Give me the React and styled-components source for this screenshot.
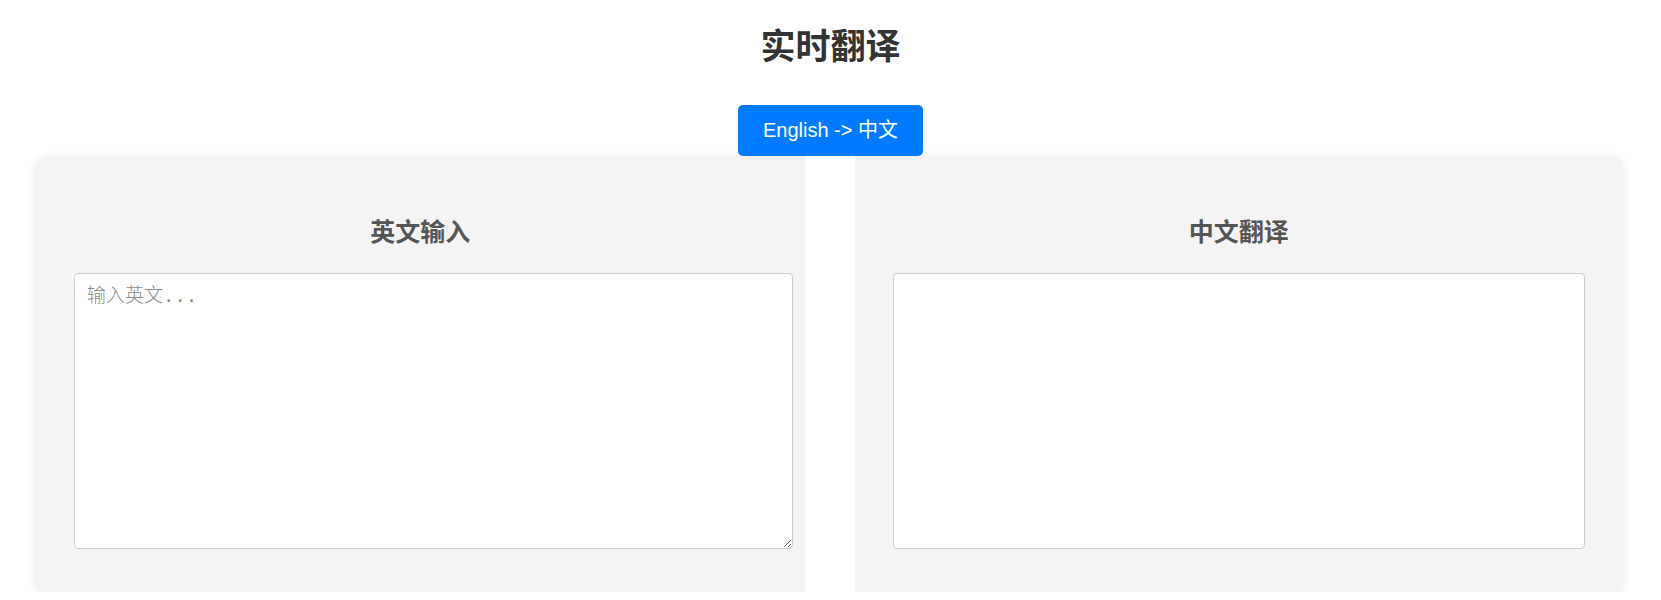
import React, { useState } from "react";
import styled, { createGlobalStyle } from "styled-components";

const GlobalStyle = createGlobalStyle`
  body {
    margin: 0;
    background: #fff;
    font-family: "Liberation Sans", Arial, "Noto Sans CJK SC", sans-serif;
  }
`;

const Page = styled.div`
  display: flex;
  flex-direction: column;
  align-items: center;
  padding-top: 24px;
`;

const Title = styled.h1`
  margin: 0;
  font-size: 35px;
  line-height: 45px;
  font-weight: bold;
  color: #333;
`;

const SwitchButton = styled.button`
  margin-top: 36px;
  padding: 14px 25px;
  font-family: inherit;
  font-size: 20px;
  line-height: 23px;
  color: #fff;
  background: #007bff;
  border: none;
  border-radius: 5px;
  cursor: pointer;
`;

const Container = styled.div`
  align-self: stretch;
  margin: 0 38px 0 36px;
  display: flex;
  gap: 50px;
  background: #fff;
  border-radius: 12px;
  overflow: hidden;
  box-shadow: 0 2px 10px rgba(0, 0, 0, 0.1);
`;

const Panel = styled.div`
  flex: 1;
  min-width: 0;
  background: #f4f4f4;
  padding: 40px 38px 43px;
`;

const PanelTitle = styled.h2`
  margin: 20px 0 25px;
  text-align: center;
  font-size: 25px;
  line-height: 32px;
  color: #555;
`;

const Input = styled.textarea`
  display: block;
  width: 100%;
  height: 250px;
  padding: 12px;
  font-size: 19px;
  line-height: 1.2;
  font-family: "Liberation Mono", "Noto Sans CJK SC", monospace;
  border: 1px solid #ccc;
  border-radius: 4px;
  background: #fff;
  outline: none;

  &::placeholder {
    color: #8a8a8a;
    font-weight: 300;
  }
`;

const Output = styled.div`
  box-sizing: border-box;
  width: 100%;
  height: 276px;
  padding: 12px;
  font-size: 19px;
  border: 1px solid #ccc;
  border-radius: 4px;
  background: #fff;
  color: #333;
  white-space: pre-wrap;
`;

export default function App() {
  const [toChinese, setToChinese] = useState(true);
  const [text, setText] = useState("");

  const from = toChinese ? "英文" : "中文";
  const to = toChinese ? "中文" : "英文";

  return (
    <>
      <GlobalStyle />
      <Page>
        <Title>实时翻译</Title>
        <SwitchButton onClick={() => setToChinese(!toChinese)}>
          {toChinese ? "English -> 中文" : "中文 -> English"}
        </SwitchButton>
        <Container>
          <Panel>
            <PanelTitle>{from}输入</PanelTitle>
            <Input
              placeholder={`输入${from}...`}
              value={text}
              onChange={(e) => setText(e.target.value)}
            />
          </Panel>
          <Panel>
            <PanelTitle>{to}翻译</PanelTitle>
            <Output>{text}</Output>
          </Panel>
        </Container>
      </Page>
    </>
  );
}
